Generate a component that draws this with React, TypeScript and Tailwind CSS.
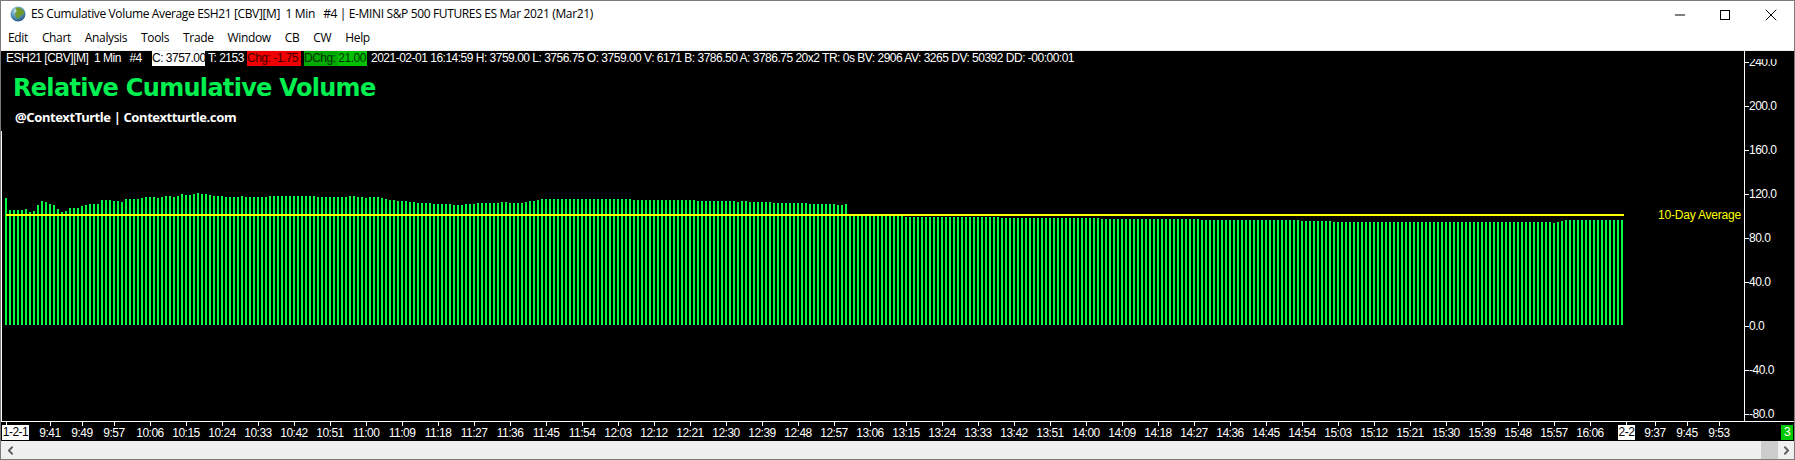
import { ChevronLeft, ChevronRight, Minus, X } from "lucide-react";

const MENU = ["Edit", "Chart", "Analysis", "Tools", "Trade", "Window", "CB", "CW", "Help"];
const Y_LABELS = ["240.0", "200.0", "160.0", "120.0", "80.0", "40.0", "0.0", "-40.0", "-80.0"];

// [top y of the bar, how many bars], left to right, spaced 4px from x=5
const BAR_RUNS: Array<[number, number]> = [
  [198, 1], [210, 4], [209, 1], [212, 1], [211, 1], [205, 1], [201, 1], [202, 1], [204, 1], [205, 1],
  [209, 1], [212, 1], [211, 1], [208, 3], [206, 1], [205, 1], [204, 3], [200, 3], [201, 2], [202, 1],
  [199, 4], [198, 1], [197, 3], [198, 1], [197, 1], [196, 2], [197, 1], [196, 1], [194, 1], [195, 2],
  [194, 1], [193, 1], [194, 2], [195, 1], [196, 3], [197, 4], [196, 1], [197, 6], [196, 12],
  [197, 8], [196, 2], [197, 2], [198, 1], [197, 3], [198, 1], [199, 1], [200, 2], [201, 3], [202, 2],
  [203, 4], [204, 5], [205, 3], [204, 3], [203, 6], [202, 2], [203, 4], [202, 1], [201, 2], [200, 1],
  [199, 23], [200, 16], [201, 10], [202, 1], [201, 2], [202, 6], [203, 9], [204, 7], [205, 2], [204, 1],
  [216, 14], [217, 24], [218, 25], [219, 25], [220, 25], [221, 8], [222, 55], [223, 1], [222, 1], [221, 1], [220, 15],
];

const BARS = BAR_RUNS.flatMap(([top, count]) => Array.from({ length: count }, () => top));

const TIMES = [
  "10:06", "10:15", "10:24", "10:33", "10:42", "10:51", "11:00", "11:09", "11:18", "11:27", "11:36",
  "11:45", "11:54", "12:03", "12:12", "12:21", "12:30", "12:39", "12:48", "12:57", "13:06", "13:15",
  "13:24", "13:33", "13:42", "13:51", "14:00", "14:09", "14:18", "14:27", "14:36", "14:45", "14:54",
  "15:03", "15:12", "15:21", "15:30", "15:39", "15:48", "15:57",
];

function Globe() {
  return (
    <svg width="16" height="16" viewBox="0 0 16 16" className="shrink-0">
      <defs>
        <radialGradient id="globe" cx="0.4" cy="0.3" r="0.8">
          <stop offset="0" stopColor="#d8ecf5" />
          <stop offset="0.45" stopColor="#5d9cc0" />
          <stop offset="1" stopColor="#1d4a78" />
        </radialGradient>
      </defs>
      <circle cx="8" cy="8" r="7.5" fill="url(#globe)" />
      <path d="M6 1.5C9 1 13 2.5 14 6c.5 2-1 3-3 3.5-1 1.5-2 3-4 3-.5-2-2-2.5-2-4.5S7 6 6.5 4.5 5 3 6 1.5Z" fill="#6f9a2c" />
    </svg>
  );
}

function Tick({ label, width }: { label: string; width: string }) {
  return (
    <div className={`${width} shrink-0`}>
      <div className="h-[4px] w-px bg-white" />
      <div className="flex w-0 justify-center">
        <span className="h-[15px] whitespace-pre leading-[15px]">{label}</span>
      </div>
    </div>
  );
}

export default function App() {
  return (
    <div className="flex h-[460px] w-[1795px] flex-col overflow-hidden border border-[#7a7a7a] bg-white font-['Open_Sans',sans-serif] text-[12px] text-black">
      <div className="flex h-[25px] shrink-0 items-center pl-[9px]">
        <Globe />
        <span className="ml-[5px] whitespace-pre tracking-[-0.03em]">
          ES Cumulative Volume Average ESH21 [CBV][M]  1 Min   #4 | E-MINI S&amp;P 500 FUTURES ES Mar 2021 (Mar21)
        </span>
        <div className="ml-auto flex items-center gap-[31px] pr-[13px] pt-[3px]">
          <Minus size={16} strokeWidth={1} absoluteStrokeWidth className="text-black" />
          <div className="ml-px h-[10px] w-[10px] border border-black" />
          <X size={20} strokeWidth={1} absoluteStrokeWidth className="text-black" />
        </div>
      </div>

      <div className="flex h-[24px] shrink-0 items-center gap-[14px] pl-[7px] tracking-[-0.03em]">
        {MENU.map((item) => (
          <span key={item}>{item}</span>
        ))}
      </div>
      <div className="h-px shrink-0 bg-[#f0f0f0]" />

      <div className="flex h-[371px] shrink-0 border-b border-white bg-black font-['Liberation_Sans',sans-serif] text-[12px] tracking-[-0.5px] text-white">
        <div className="relative w-[1743px] shrink-0 overflow-hidden">
          <svg className="absolute inset-0" width="1743" height="371">
            <rect x="0" y="80" width="1" height="291" fill="#ffffff" />
            {BARS.map((top, index) => (
              <rect key={index} x={4 + index * 4} y={top - 51} width="2" height={325 - top} fill="#00ff41" />
            ))}
            <rect x="5" y="163" width="1618" height="2" fill="#ffff00" />
          </svg>

          <div className="relative flex h-[15px] items-center whitespace-pre pl-[5px] leading-[15px]">
            <span className="w-[146px]">ESH21 [CBV][M]  1 Min   #4</span>
            <span className="w-[53px] overflow-hidden bg-white text-black">C: 3757.00</span>
            <span className="w-[42px] pl-[3px]">T: 2153</span>
            <span className="w-[54px] overflow-hidden bg-[#f00000] text-[#400000]">Chg: -1.75</span>
            <span className="ml-[3px] flex w-[63px] overflow-hidden text-[#003000]">
              <span className="bg-[#00aa00]">DChg: </span>
              <span className="flex-1 bg-[#00c000]">21.00</span>
            </span>
            <span className="ml-[4px]">
              2021-02-01 16:14:59 H: 3759.00 L: 3756.75 O: 3759.00 V: 6171 B: 3786.50 A: 3786.75 20x2 TR: 0s BV: 2906 AV: 3265 DV: 50392 DD: -00:00:01
            </span>
          </div>

          <div className="relative ml-[12px] mt-[7px] font-['DejaVu_Sans',sans-serif] text-[24px] font-bold leading-[30px] tracking-[-0.7px] text-[#00f050]">
            Relative Cumulative Volume
          </div>
          <div className="relative ml-[14px] mt-[6px] font-['Noto_Sans',sans-serif] text-[13px] font-bold leading-[16px] tracking-[-0.4px] text-white">
            @ContextTurtle | Contextturtle.com
          </div>

          <span className="absolute right-[3px] top-[157px] leading-[15px] tracking-[-0.2px] text-[#ffff00]">10-Day Average</span>
        </div>

        <div className="w-px shrink-0 bg-white" />
        <div className="relative flex-1 overflow-hidden">
          <div className="-mt-[11px] flex flex-col">
            {Y_LABELS.map((label) => (
              <div key={label} className="flex h-[44px] shrink-0 items-center">
                <div className="h-px w-[4px] bg-white" />
                <span className="leading-[15px]">{label}</span>
              </div>
            ))}
          </div>
          <div className="absolute inset-x-0 top-0 h-[8px] bg-black" />
        </div>
      </div>

      <div className="flex h-[19px] shrink-0 bg-black font-['Liberation_Sans',sans-serif] text-[12px] tracking-[-0.5px] text-white">
        <div className="w-[5px] shrink-0" />
        <div className="w-[44px] shrink-0">
          <div className="h-[3px] w-px bg-white" />
          <div className="-ml-[4px] h-[15px] w-[27px] overflow-hidden whitespace-pre bg-white text-center leading-[15px] text-black">1-2-1</div>
        </div>
        <Tick label="9:41" width="w-[32px]" />
        <Tick label="9:49" width="w-[32px]" />
        <Tick label="9:57" width="w-[36px]" />
        {TIMES.map((time) => (
          <Tick key={time} label={time} width="w-[36px]" />
        ))}
        <Tick label="16:06" width="w-[36px]" />
        <div className="w-[29px] shrink-0">
          <div className="h-[3px] w-px bg-white" />
          <div className="-ml-[8px] h-[15px] w-[17px] bg-white text-center leading-[15px] text-black">2-2</div>
        </div>
        <Tick label="9:37" width="w-[32px]" />
        <Tick label="9:45" width="w-[32px]" />
        <Tick label="9:53" width="w-[62px]" />
        <div className="mt-[3px] h-[15px] w-[12px] shrink-0 bg-[#00c800] text-center leading-[15px] text-white">3</div>
      </div>

      <div className="flex flex-1 items-center justify-between bg-[#f0f0f0] pl-[3px] text-[#606060]">
        <ChevronLeft size={13} strokeWidth={3.5} />
        <div className="flex h-full items-center">
          <div className="h-full w-[17px] bg-[#cdcdcd]" />
          <ChevronRight size={13} strokeWidth={3.5} className="ml-[2px] mr-[1px]" />
        </div>
      </div>
    </div>
  );
}
